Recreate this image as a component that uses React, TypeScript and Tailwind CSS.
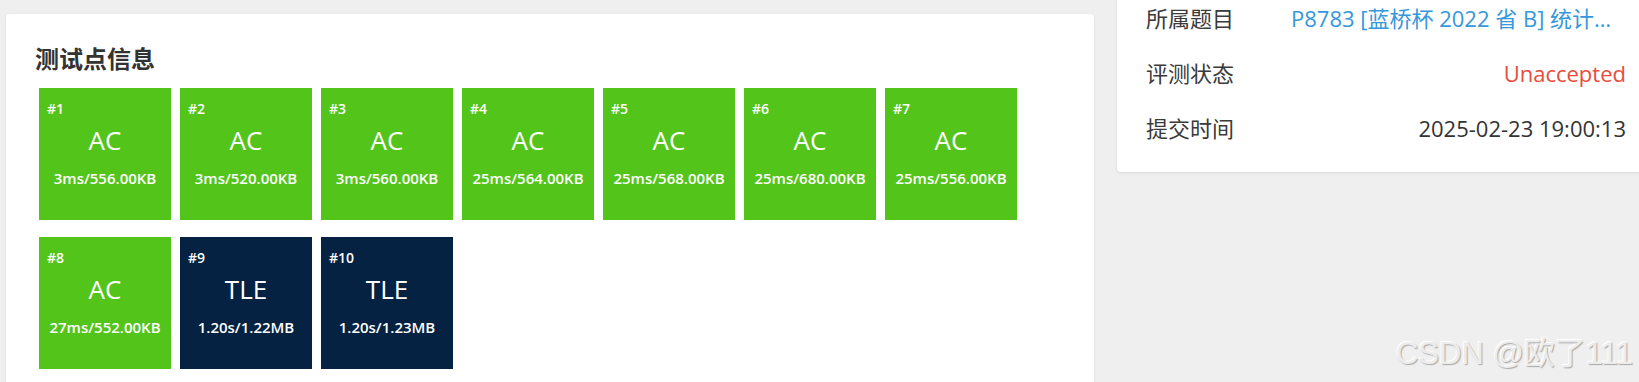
import React from "react";

type Case = { id: number; status: "AC" | "TLE"; info: string };

const cases: Case[] = [
  { id: 1, status: "AC", info: "3ms/556.00KB" },
  { id: 2, status: "AC", info: "3ms/520.00KB" },
  { id: 3, status: "AC", info: "3ms/560.00KB" },
  { id: 4, status: "AC", info: "25ms/564.00KB" },
  { id: 5, status: "AC", info: "25ms/568.00KB" },
  { id: 6, status: "AC", info: "25ms/680.00KB" },
  { id: 7, status: "AC", info: "25ms/556.00KB" },
  { id: 8, status: "AC", info: "27ms/552.00KB" },
  { id: 9, status: "TLE", info: "1.20s/1.22MB" },
  { id: 10, status: "TLE", info: "1.20s/1.23MB" },
];

function Tile({ c }: { c: Case }) {
  return (
    <div
      className={
        "flex h-[132px] w-[132px] flex-col text-white " +
        (c.status === "AC" ? "bg-[#52c41a]" : "bg-[#052242]")
      }
    >
      <div className="pl-[8px] pt-[12px] text-[14px] font-semibold leading-[18px]">#{c.id}</div>
      <div className="mt-[6px] text-center text-[26px] leading-[32px]">{c.status}</div>
      <div className="mt-[12px] text-center text-[15px] font-semibold leading-[20px]">{c.info}</div>
    </div>
  );
}

function Row({ label, children, left }: { label: string; children: React.ReactNode; left?: boolean }) {
  return (
    <div className="flex h-[55px] items-center justify-between">
      <span className="text-[#3a3a3a]">{label}</span>
      <div className={"w-[335px] whitespace-nowrap " + (left ? "text-left" : "text-right")}>{children}</div>
    </div>
  );
}

export default function App() {
  return (
    <div
      className="relative h-[382px] w-[1639px] overflow-hidden bg-[#efefef]"
      style={{ fontFamily: '"Open Sans", "Noto Sans CJK SC", sans-serif' }}
    >
      <div className="flex w-[1660px] items-start gap-[23px] pl-[6px]">
        <div className="mt-[14px] h-[400px] w-[1088px] shrink-0 rounded-[4px] bg-white pl-[29px] pt-[30px] shadow-[0_1px_3px_rgba(26,26,26,0.1)]">
          <h2 className="text-[24px] font-bold leading-[30px] text-[#333]">测试点信息</h2>
          <div className="ml-[4px] mt-[14px] flex w-[1000px] flex-wrap gap-x-[9px] gap-y-[17px]">
            {cases.map((c) => (
              <Tile key={c.id} c={c} />
            ))}
          </div>
        </div>
        <div className="-mt-[9px] w-[538px] shrink-0 rounded-[4px] bg-white px-[29px] pb-[16px] text-[22px] shadow-[0_1px_3px_rgba(26,26,26,0.1)]">
          <Row label="所属题目" left>
            <span className="text-[#3498db]">P8783 [蓝桥杯 2022 省 B] 统计…</span>
          </Row>
          <Row label="评测状态">
            <span className="text-[#e74c3c]">Unaccepted</span>
          </Row>
          <Row label="提交时间">
            <span className="text-[#333]">2025-02-23 19:00:13</span>
          </Row>
        </div>
      </div>
      <div
        className="absolute bottom-[10px] right-[6px] text-[31px] leading-[36px] text-[#ececec] [text-shadow:1px_1px_1px_#a8a8a8,-1px_-1px_0_#ffffff]"
        style={{ fontFamily: '"Liberation Sans", "Noto Sans CJK SC", sans-serif' }}
      >
        CSDN @欧了111
      </div>
    </div>
  );
}
